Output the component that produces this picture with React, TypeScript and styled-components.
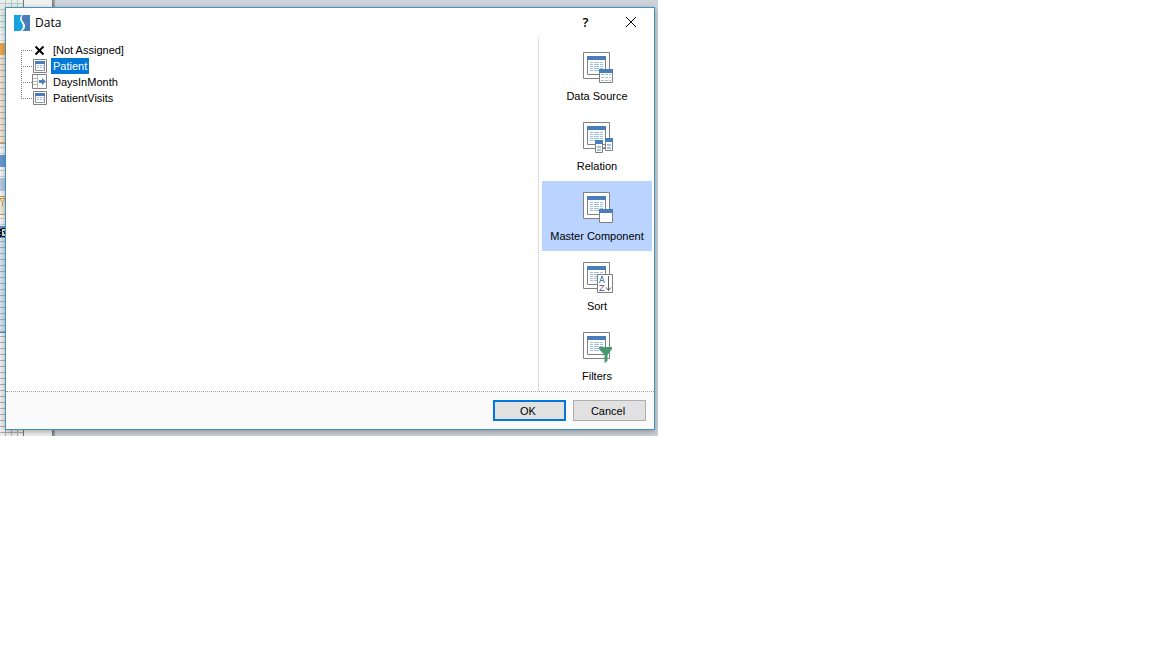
import React from "react";
import styled, { createGlobalStyle, css } from "styled-components";

const GlobalStyle = createGlobalStyle`
  * { box-sizing: border-box; }
  body {
    margin: 0;
    background: #fff;
    color: #000;
    font: 11px/16px "Liberation Sans", Arial, sans-serif;
  }
`;

const Workspace = styled.main`
  display: grid;
  width: 100%;
  max-width: 658px;
  overflow: hidden;
  background: #cdd2db;
`;

const Designer = styled.div`
  grid-area: 1 / 1;
  display: flex;
`;

const ReportPage = styled.div`
  width: 24px;
  border-right: 1px solid #777;
  display: flex;
  flex-direction: column;
`;

const Margin = styled.div`
  width: 31px;
  background: linear-gradient(to right, #f1f1f1 28px, #777 28px, #a8adb5);
`;

const Band = styled.div<{ $h: number; $color: string; $lines?: string; $columns?: boolean }>`
  flex: 0 0 ${(p) => p.$h}px;
  overflow: hidden;
  background-color: ${(p) => p.$color};
  ${(p) =>
    p.$lines &&
    css`
      background-image: repeating-linear-gradient(to bottom, transparent 0 3px, ${p.$lines} 3px 4px, transparent 4px 6px)
        ${p.$columns ? `, repeating-linear-gradient(to right, transparent 0 5px, ${p.$lines} 5px 6px)` : ""};
    `}
`;

const BandMark = styled.svg`
  display: block;
  width: 6px;
  height: 12px;
`;

const Dialog = styled.section`
  grid-area: 1 / 1;
  margin: 7px 3px 6px 5px;
  border: 1px solid #4392bd;
  background: #fff;
  box-shadow: 0 2px 6px rgba(0, 0, 0, 0.3);
  display: flex;
  flex-direction: column;
`;

const TitleBar = styled.header`
  height: 30px;
  padding: 0 1px 0 8px;
  display: flex;
  align-items: center;
`;

const Title = styled.h1`
  flex: 1;
  margin: 0 0 0 5px;
  font: 12px/16px "Open Sans", sans-serif;
`;

const TitleButton = styled.button`
  width: 45px;
  height: 30px;
  padding: 0 0 2px;
  border: 0;
  background: none;
  display: grid;
  place-items: center;
  font: 600 13px/16px "Open Sans", sans-serif;
`;

const Body = styled.div`
  display: flex;
  height: 354px;
  border-bottom: 1px dotted #a0a0a0;
`;

const Tree = styled.ul`
  flex: 1;
  margin: 0;
  padding: 4px 0 0 15px;
  list-style: none;
`;

const Node = styled.li`
  height: 16px;
  display: flex;
  align-items: center;
`;

const Branch = styled.svg`
  width: 11px;
  height: 16px;
  stroke: #808080;
  stroke-dasharray: 1 1;
  fill: none;
`;

const NodeIcon = styled.svg`
  width: 16px;
  height: 16px;
  margin-right: 3px;
`;

const NodeLabel = styled.button<{ $selected?: boolean }>`
  height: 16px;
  padding: 0 2px;
  border: 0;
  font: inherit;
  line-height: 16px;
  background: ${(p) => (p.$selected ? "#0078d7" : "none")};
  color: ${(p) => (p.$selected ? "#fff" : "#000")};
`;

const Sidebar = styled.nav`
  width: 116px;
  padding: 3px 2px 0 3px;
  border-left: 1px dotted #c0c0c0;
`;

const Category = styled.button<{ $active?: boolean }>`
  width: 100%;
  height: 70px;
  padding: 9px 0 0;
  border: 0;
  display: flex;
  flex-direction: column;
  align-items: center;
  gap: 4px;
  font: inherit;
  line-height: 16px;
  color: #000;
  background: ${(p) => (p.$active ? "#bad4ff" : "none")};
`;

const CategoryIcon = styled.svg`
  width: 32px;
  height: 34px;
`;

const Footer = styled.footer`
  height: 37px;
  padding: 8px 8px 0;
  background: #fafafa;
  display: flex;
  justify-content: flex-end;
  gap: 7px;
`;

const Button = styled.button<{ $primary?: boolean }>`
  width: 73px;
  height: 21px;
  padding: 0 3px 0 0;
  font: inherit;
  color: #000;
  background: #e1e1e1;
  border: ${(p) => (p.$primary ? "2px solid #0078d7" : "1px solid #adadad")};
`;

const FilterMark = () => <path d="M0 1.500l2.500 4v4M5.500 1.500l-3 4M0 1.500h5" stroke="#c9a25c" fill="none" />;
const DropMark = () => (
  <g>
    <path d="M0 3h1v2H0zM0 6h1v2H0zM0 9h1v2H0z" fill="#000" />
    <path d="M1.500 2.500h5v8h-5z" fill="#ddd" stroke="#222" />
    <path d="M3 5h3v1H3zM4 6h2v2H4z" fill="#222" />
  </g>
);

const BANDS = [
  { h: 31, color: "#e6efeb", lines: "#b9c8c2", columns: true },
  { h: 12, color: "#f4f4f4", lines: "#d8d8d8" },
  { h: 12, color: "#eda650" },
  { h: 88, color: "#f3e2d4", lines: "#c4b2a4" },
  { h: 1, color: "#d99a48" },
  { h: 11, color: "#f4f4f4", lines: "#cfcfcf" },
  { h: 12, color: "#6a9ad2" },
  { h: 11, color: "#f4f4f4", lines: "#cfcfcf" },
  { h: 13, color: "#b7c8e4" },
  { h: 5, color: "#f4f4f4" },
  { h: 1, color: "#d99a48" },
  { h: 17, color: "#f0e6da", Mark: FilterMark },
  { h: 1, color: "#d99a48" },
  { h: 11, color: "#f4f4f4", lines: "#cfcfcf" },
  { h: 12, color: "#5c90cc", Mark: DropMark },
  { h: 94, color: "#d4e4f0", lines: "#9fb2be" },
  { h: 1, color: "#5c90cc" },
  { h: 103, color: "#f0f0f0", lines: "#b0b0b0", columns: true },
];

const TableGlyph = () => (
  <g>
    <path d="M1.500 1.500h13v13h-13z" fill="#fff" stroke="#808080" />
    <path d="M3 4h10v9H3z" fill="#8d9aab" />
    <path d="M4 6h8v6H4z" fill="#fff" />
    <path d="M3 3h10v3H3z" fill="#4a7ebb" />
    <path d="M5 7h2v1H5zM8 7h2v1H8zM11 7h1v1h-1zM5 9h2v1H5zM8 9h2v1H8zM11 9h1v1h-1z" fill="#9dbbe0" />
  </g>
);

const RelationGlyph = () => (
  <g>
    <path d="M.5.5h14v14H.5z" fill="#fff" stroke="#808080" />
    <path d="M5.500 1v13M1 4.500h4M1 7.500h4M1 10.500h4" stroke="#b8b8b8" />
    <path d="M7 6h3V4l4 3.500-4 3.500V9H7z" fill="#4a7ebb" />
  </g>
);

const CrossGlyph = () => <path d="M3.500 4.500l8 8M11.500 4.500l-8 8" stroke="#000" strokeWidth="2" />;

const NODES = [
  { label: "[Not Assigned]", Glyph: CrossGlyph },
  { label: "Patient", Glyph: TableGlyph, selected: true },
  { label: "DaysInMonth", Glyph: RelationGlyph },
  { label: "PatientVisits", Glyph: TableGlyph },
];

const BaseTable = () => (
  <g>
    <path d="M2.500 2.500h26v26h-26z" fill="#fff" stroke="#808080" />
    <path d="M6.500 6.500h18v18h-18z" fill="#fff" stroke="#808080" />
    <path d="M6 6h19v4H6z" fill="#4a7ebb" />
    <path
      d="M9 12.500h3m1 0h5m1 0h3M9 14.500h3m1 0h5m1 0h3M9 16.500h3m1 0h5m1 0h3M9 18.500h3m1 0h5m1 0h3M9 20.500h3m1 0h5m1 0h3"
      stroke="#9dc0e0"
    />
  </g>
);

const MasterBadge = () => (
  <g>
    <path d="M18.500 19.500h13v13h-13z" fill="#fff" stroke="#808080" />
    <path d="M18 19h14v4H18z" fill="#4a7ebb" />
  </g>
);

const SourceBadge = () => (
  <g>
    <MasterBadge />
    <path
      d="M20 24.500h3m1 0h3m1 0h2M20 27.500h3m1 0h3m1 0h2M20 30.500h3m1 0h3m1 0h2"
      stroke="#9dc0e0"
    />
  </g>
);

const RelationBadge = () => (
  <g>
    <path d="M14.500 20.500h7v12h-7zM24.500 18.500h7v12h-7z" fill="#fff" stroke="#808080" />
    <path d="M14 20h8v4h-8zM24 18h8v4h-8z" fill="#4a7ebb" />
    <path d="M16 26h4v2h-4zM16 29h4v2h-4zM26 24h4v2h-4zM26 27h4v2h-4z" fill="#a3c4e6" />
    <path d="M22 28.500h1v-1h1" stroke="#808080" fill="none" />
  </g>
);

const SortBadge = () => (
  <g fill="none">
    <path d="M16.500 14.500h15v18h-15z" fill="#fff" stroke="#808080" />
    <path d="M18.500 23l2.500-7 2.500 7M19.500 20.500h3" stroke="#4a7ebb" />
    <path d="M18.500 25.500h4.500l-4.500 5h5" stroke="#8a5ca8" />
    <path d="M27.500 16v14M25 27.500l2.500 3 2.500-3" stroke="#606060" />
  </g>
);

const FilterBadge = () => <path d="M18 17h13v2l-4.500 6v6l-3 2v-8L18 19z" fill="#45996d" />;

const CATEGORIES = [
  { label: "Data Source", Badge: SourceBadge },
  { label: "Relation", Badge: RelationBadge },
  { label: "Master Component", Badge: MasterBadge, active: true },
  { label: "Sort", Badge: SortBadge },
  { label: "Filters", Badge: FilterBadge },
];

export default function App() {
  return (
    <>
      <GlobalStyle />
      <Workspace>
        <Designer aria-hidden="true">
          <ReportPage>
            {BANDS.map(({ h, color, lines, columns, Mark }, i) => (
              <Band key={i} $h={h} $color={color} $lines={lines} $columns={columns}>
                {Mark && (
                  <BandMark>
                    <Mark />
                  </BandMark>
                )}
              </Band>
            ))}
          </ReportPage>
          <Margin />
        </Designer>
        <Dialog role="dialog" aria-labelledby="dialog-title">
          <TitleBar>
            <svg width="16" height="16" viewBox="0 0 16 16" aria-hidden="true">
              <path d="M0 0h16v16H0z" fill="#4a7ebb" />
              <path d="M0 0h8C4 5 11 8 10 11 10 13 8 15 6 16H0z" fill="#17a2e0" />
              <path d="M8 0C3 5 9 7 9 11 9 13 8 15 6 16h2C10 15 11 13 11 11 11 7 5 5 9 0z" fill="#fff" />
            </svg>
            <Title id="dialog-title">Data</Title>
            <TitleButton aria-label="Help">?</TitleButton>
            <TitleButton aria-label="Close">
              <svg width="12" height="12" viewBox="0 0 12 12" aria-hidden="true">
                <path d="M1 1l10 10M11 1L1 11" stroke="#000" />
              </svg>
            </TitleButton>
          </TitleBar>
          <Body>
            <Tree>
              {NODES.map(({ label, Glyph, selected }, i) => (
                <Node key={label}>
                  <Branch aria-hidden="true">
                    <path d={`M.5 ${i === 0 ? 8 : 0}V${i === NODES.length - 1 ? 9 : 16}M0 8.500h11`} />
                  </Branch>
                  <NodeIcon viewBox="0 0 16 16" aria-hidden="true">
                    <Glyph />
                  </NodeIcon>
                  <NodeLabel $selected={selected}>{label}</NodeLabel>
                </Node>
              ))}
            </Tree>
            <Sidebar aria-label="Data settings">
              {CATEGORIES.map(({ label, Badge, active }) => (
                <Category key={label} $active={active}>
                  <CategoryIcon viewBox="0 0 32 34" aria-hidden="true">
                    <BaseTable />
                    <Badge />
                  </CategoryIcon>
                  {label}
                </Category>
              ))}
            </Sidebar>
          </Body>
          <Footer>
            <Button $primary>OK</Button>
            <Button>Cancel</Button>
          </Footer>
        </Dialog>
      </Workspace>
    </>
  );
}
